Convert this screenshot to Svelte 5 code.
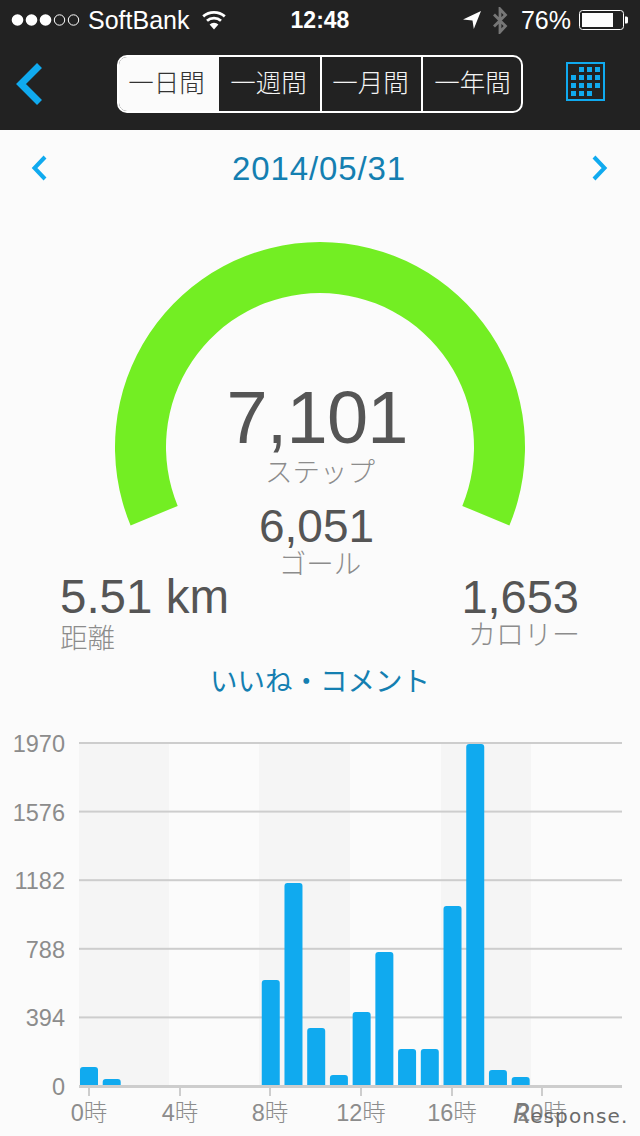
<script>
  const ticks = [1970, 1576, 1182, 788, 394, 0];
  const tickY = (i) => 743 + i * 68.6;
  const bars = [[0,1067],[1,1079],[8,980],[9,883],[10,1028],[11,1075],[12,1012],[13,952],[14,1049],[15,1049],[16,906],[17,744],[18,1070],[19,1077]];
  const hours = [[0,89],[4,180],[8,270],[12,361],[16,452],[20,542]];
  const bands = [[79,90],[259,91],[441,90]];
  const barPath = (h, top) => {
    const x = 80 + h * 22.72;
    return `M${x} 1085V${top + 3}q0 -3 3 -3h12q3 0 3 3V1085Z`;
  };
  const seg = ['一日間', '一週間', '一月間', '一年間'];
  const cal = [
    [1,0],[2,0],[3,0],
    [0,1],[1,1],[2,1],[3,1],
    [0,2],[1,2],[2,2],[3,2],
    [0,3],[1,3],[2,3]
  ];
</script>

<div class="page">
  <header class="top">
    <div class="status">
      <div class="st-left">
        <svg class="signal" width="72" height="14" viewBox="0 0 72 14">
          <circle cx="6.5" cy="7" r="5.8" fill="#fff"/>
          <circle cx="20.5" cy="7" r="5.8" fill="#fff"/>
          <circle cx="34.5" cy="7" r="5.8" fill="#fff"/>
          <circle cx="48.5" cy="7" r="5.2" fill="none" stroke="#fff" stroke-width="1"/>
          <circle cx="62.5" cy="7" r="5.2" fill="none" stroke="#fff" stroke-width="1"/>
        </svg>
        <span class="carrier">SoftBank</span>
        <svg class="wifi" width="24" height="20" viewBox="0 0 24 20">
          <path d="M12 19.500 7.600 14.500a6.600 6.600 0 0 1 8.800 0Z" fill="#fff"/>
          <path d="M5 10.800a10.600 10.600 0 0 1 14 0" fill="none" stroke="#fff" stroke-width="2.800"/>
          <path d="M1.200 6.400a16.500 16.500 0 0 1 21.600 0" fill="none" stroke="#fff" stroke-width="2.800"/>
        </svg>
      </div>
      <span class="time">12:48</span>
      <div class="st-right">
        <svg class="loc" width="18" height="18" viewBox="0 0 18 18"><path d="M0 8.500 18 0 10.800 18 9.500 9.500Z" fill="#fff"/></svg>
        <svg class="bt" width="16" height="27" viewBox="0 0 16 27"><path d="M2 7.500 13.500 19 8 25V2l5.500 6L2 19.500" fill="none" stroke="#777" stroke-width="2.800"/></svg>
        <span class="pct">76%</span>
        <svg class="batt" width="50" height="20" viewBox="0 0 50 20">
          <rect x="0.500" y="0.500" width="44" height="19" rx="3" fill="none" stroke="#fff" stroke-width="1"/>
          <rect x="3" y="3" width="31" height="14" fill="#fff"/>
          <path d="M46 6.500h1.500q1.500 0 1.500 1.500v4q0 1.500 -1.500 1.500H46Z" fill="#fff"/>
        </svg>
      </div>
    </div>
    <nav class="nav">
      <svg class="back" width="30" height="44" viewBox="0 0 30 44"><path d="M23.500 3.500 5 22l18.500 18.500" fill="none" stroke="#10aaef" stroke-width="7"/></svg>
      <div class="seg">
        {#each seg as s, i}
          <span class="seg-item" class:on={i === 0}>{s}</span>
        {/each}
      </div>
      <div class="cal">
        {#each cal as [c, r]}
          <i class="cal-dot" style="grid-column:{c + 1};grid-row:{r + 1}"></i>
        {/each}
      </div>
    </nav>
  </header>

  <div class="date">
    <svg width="16" height="26" viewBox="0 0 16 26"><path d="M14 2 3.500 13 14 24" fill="none" stroke="#10aaef" stroke-width="4"/></svg>
    <span class="date-text">2014/05/31</span>
    <svg width="16" height="26" viewBox="0 0 16 26"><path d="M2 2 12.500 13 2 24" fill="none" stroke="#10aaef" stroke-width="4"/></svg>
  </div>

  <section class="gauge">
    <svg class="arc" width="640" height="340" viewBox="0 0 640 340">
      <path d="M130.600 319.500A205 205 0 1 1 509.400 319.500L462.300 299.900A154 154 0 1 0 177.700 299.900Z" fill="#73ee23"/>
    </svg>
    <div class="steps">7,101</div>
    <div class="label steps-label">ステップ</div>
    <div class="goal">6,051</div>
    <div class="label goal-label">ゴール</div>
    <div class="stats">
      <div class="stat">
        <div class="stat-num">5.51 km</div>
        <div class="label">距離</div>
      </div>
      <div class="stat right">
        <div class="stat-num">1,653</div>
        <div class="label">カロリー</div>
      </div>
    </div>
    <div class="like">いいね・コメント</div>
  </section>

  <svg class="chart" width="640" height="416" viewBox="0 720 640 416">
    {#each bands as [x, w]}
      <rect {x} y="743" width={w} height="342" fill="#f5f5f5"/>
    {/each}
    {#each ticks as t, i}
      <rect x="79" y={tickY(i) - 1} width="543" height={i === 5 ? 3 : 2} fill="#cdcdcd"/>
      <text class="ax" x="65" y={tickY(i) + 9} text-anchor="end">{t}</text>
    {/each}
    {#each bars as [h, top]}
      <path d={barPath(h, top)} fill="#10aaef"/>
    {/each}
    {#each hours as [h, x]}
      <rect x={x - 1} y="1087" width="2" height="9" fill="#cdcdcd"/>
      <text class="ax" {x} y="1121" text-anchor="middle">{h}時</text>
    {/each}
    <text class="mark" x="513" y="1123"><tspan class="mark-r">R</tspan><tspan dx="-2">esponse.</tspan></text>
  </svg>
</div>

<style>
  :global(body) { margin: 0; background: #fbfbfb; }
  .page {
    width: 640px;
    height: 1136px;
    overflow: hidden;
    font-family: "Liberation Sans", "Noto Sans CJK JP", sans-serif;
  }
  .top { height: 130px; background: #222; color: #fff; }
  .status {
    height: 40px;
    display: grid;
    grid-template-columns: 1fr auto 1fr;
    align-items: center;
    font-size: 24px;
    padding: 0 11px 0 11px;
  }
  .st-left, .st-right { display: flex; align-items: center; }
  .st-right { justify-content: flex-end; }
  .carrier { margin: 1px 0 0 5px; font-size: 25px; }
  .wifi { margin-left: 13px; }
  .time { font-weight: 700; font-size: 23px; margin-top: 1px; }
  .loc { margin-right: 11px; }
  .bt { margin-right: 13px; }
  .pct { font-size: 25px; margin: 1px 8px 0 0; }
  .nav {
    height: 90px;
    padding: 15px 35px 0 16px;
    box-sizing: border-box;
    display: flex;
    align-items: flex-start;
  }
  .back { margin: 7px 0 0 0; }
  .seg {
    margin-left: 71px;
    width: 406px;
    height: 58px;
    box-sizing: border-box;
    border: 2px solid #fff;
    border-radius: 10px;
    display: grid;
    grid-template-columns: 100px 101px 101px 100px;
    overflow: hidden;
  }
  .seg-item {
    box-sizing: border-box;
    display: flex;
    align-items: center;
    justify-content: center;
    padding: 0 2px 8px 0;
    font-size: 25.500px;
    font-weight: 300;
    font-family: "Noto Sans CJK JP", sans-serif;
    border-left: 2px solid #fff;
    color: #f4f4f4;
  }
  .seg-item:nth-child(2) { border-left: 0; }
  .seg-item:nth-child(4) { padding: 0 0 8px 1px; }
  .seg-item.on { background: #fbfbfb; color: #333; border-left: 0; padding-right: 5px; }
  .cal {
    margin-left: 43px;
    margin-top: 7px;
    width: 39px;
    height: 39px;
    box-sizing: border-box;
    border: 2px solid #10aaef;
    display: grid;
    grid-template-columns: repeat(4, 5px);
    grid-template-rows: repeat(4, 5px);
    gap: 3px;
    padding: 3px 0 0 3px;
  }
  .cal-dot { background: #10aaef; }
  .date {
    height: 76px;
    display: flex;
    align-items: center;
    justify-content: space-between;
    padding: 0 32px 0 31px;
  }
  .date-text { font-size: 33px; letter-spacing: 0.9px; color: #147fb1; margin: 2px 0 0 -1px; }
  .gauge {
    position: relative;
    height: 514px;
    box-sizing: border-box;
    padding-top: 182px;
    text-align: center;
    color: #555;
  }
  .arc { position: absolute; left: 0; top: 0; }
  .steps, .goal, .label, .stats, .like { position: relative; }
  .steps { font-size: 74px; line-height: 60px; margin-left: -6px; letter-spacing: -0.800px; }
  .label {
    font-family: "Noto Sans CJK JP", sans-serif;
    font-size: 27.500px;
    font-weight: 300;
    color: #8c8c8c;
    line-height: 30px;
  }
  .steps-label { margin-top: 7px; }
  .goal { font-size: 46px; line-height: 40px; margin: 21px 0 0 -7px; }
  .goal-label { margin-top: 2px; line-height: 28px; }
  .stats {
    display: flex;
    justify-content: space-between;
    padding: 0 60px;
    margin-top: 0;
    text-align: left;
  }
  .stat-num { font-size: 47.500px; line-height: 42px; }
  .stat.right { text-align: right; }
  .stat.right .stat-num { font-size: 47px; margin-right: 1px; }
  .stat .label { margin-top: 3px; }
  .stat.right .label { margin-top: 0; font-size: 28px; }
  .like {
    font-family: "Noto Sans CJK JP", sans-serif;
    font-size: 27.500px;
    font-weight: 400;
    color: #147fb1;
    line-height: 32px;
    margin-top: 12px;
  }
  .chart { display: block; }
  .ax { font-size: 23.500px; fill: #8c8c8c; font-family: "Liberation Sans", "Noto Sans CJK JP", sans-serif; font-weight: 300; }
  .mark { font-size: 20px; letter-spacing: 1.100px; fill: #6a6a6a; font-family: "DejaVu Sans", sans-serif; }
  .mark-r { font-size: 26px; font-style: italic; fill: #7a7a7a; }
</style>
